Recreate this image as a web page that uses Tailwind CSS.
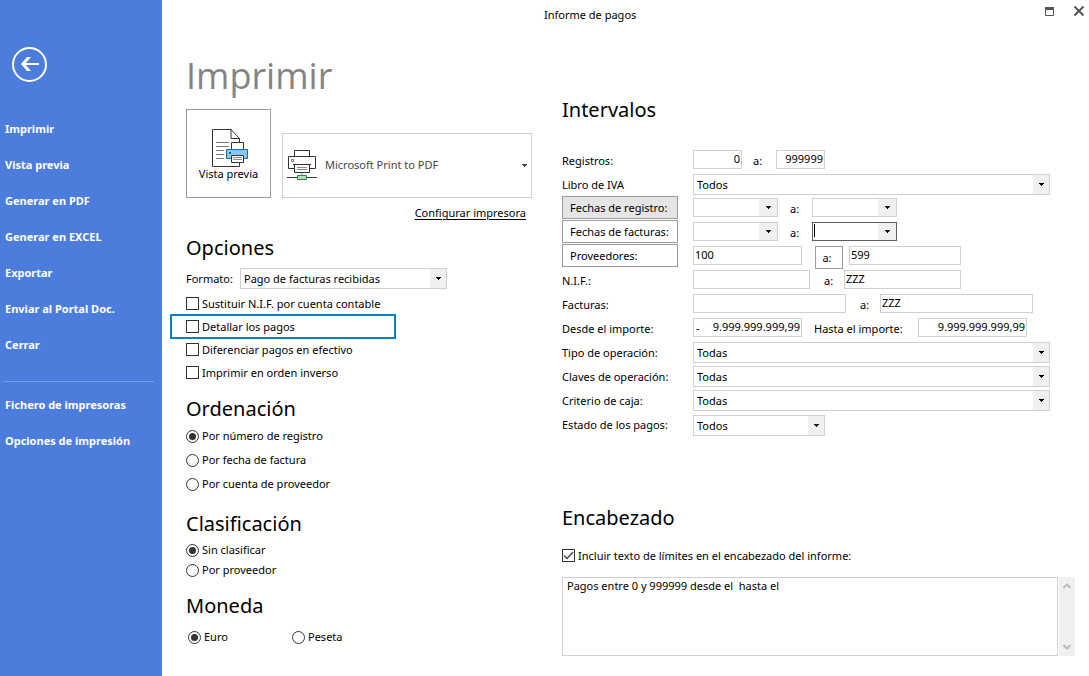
<!DOCTYPE html>
<html lang="es">
<head>
<meta charset="utf-8">
<title>Informe de pagos</title>
<script src="https://cdn.jsdelivr.net/npm/@tailwindcss/browser@4"></script>
</head>
<body class="bg-white text-black text-[11px] leading-4 font-['Noto_Sans','Open_Sans',sans-serif]">
<svg class="hidden"><symbol id="arrow" viewBox="0 0 5 3"><path d="M0 0h5v1H4v1H3v1H2V2H1V1H0z" fill="currentColor"/></symbol></svg>
<div class="flex min-h-screen">
  <nav class="w-[162px] shrink-0 bg-[#4c7ddd] text-white font-bold pt-[46px]">
    <button aria-label="Volver" class="block ml-[11px] mb-[29px]">
      <svg class="block" width="36" height="36" viewBox="0 0 36 36" fill="none" stroke="#fff" stroke-width="2"><circle cx="18.5" cy="18.5" r="16.5"/><path d="M11 18h17" stroke-width="2"/><path d="M10 18l6-7h4l-6 7 6 7h-4z" fill="#fff" stroke="none"/></svg>
    </button>
    <ul class="pl-[5px]">
      <li class="h-9 flex items-center"><a href="#">Imprimir</a></li>
      <li class="h-9 flex items-center"><a href="#">Vista previa</a></li>
      <li class="h-9 flex items-center"><a href="#">Generar en PDF</a></li>
      <li class="h-9 flex items-center"><a href="#">Generar en EXCEL</a></li>
      <li class="h-9 flex items-center"><a href="#">Exportar</a></li>
      <li class="h-9 flex items-center"><a href="#">Enviar al Portal Doc.</a></li>
      <li class="h-9 flex items-center"><a href="#">Cerrar</a></li>
    </ul>
    <hr class="ml-1 mr-2 mt-[18px] mb-[5px] border-[#7b9fe6]">
    <ul class="pl-[5px]">
      <li class="h-9 flex items-center"><a href="#">Fichero de impresoras</a></li>
      <li class="h-9 flex items-center"><a href="#">Opciones de impresión</a></li>
    </ul>
  </nav>

  <div class="flex-1 min-w-0">
    <header class="h-8 flex items-start pl-[382px] pr-[5px] pt-[7px]">
      <span class="flex-1">Informe de pagos</span>
      <button aria-label="Maximizar" class="mr-5"><svg class="block" width="9" height="9" fill="none" stroke="#555"><path d="M.5 .5h8v8h-8z"/><path d="M0 1.5h9" stroke-width="3"/></svg></button>
      <button aria-label="Cerrar" class="-mt-px"><svg class="block" width="10" height="10" stroke="#555" stroke-width="2"><path d="M0.500 .5l9 9M9.500 .5l-9 9"/></svg></button>
    </header>

    <main class="flex pl-6 pr-[14px]">
      <section class="w-[376px] shrink-0 pt-5">
        <h1 class="h-12 leading-[48px] text-[36px] text-[#848484] font-['Open_Sans','Noto_Sans',sans-serif]">Imprimir</h1>
        <div class="flex items-end gap-[11px] mt-[9px]">
          <button class="w-[85px] h-[89px] border border-[#9c9c9c] flex flex-col items-center pt-[18px]">
            <svg class="self-start ml-6" width="38" height="40" viewBox="0 0 38 40" fill="none" stroke="#333">
              <path d="M20.500 1.5h-19v37h27V10.500L20 1.5V10.500H28.500" fill="#fff"/>
              <path d="M5 14.500h13M5 18.500h13M5 22.500h8M5 26.500h8M5 30.500h8" stroke="#777"/>
              <path d="M20.500 21.500v-7h12v7" fill="#fff"/>
              <path d="M15.500 21.500h21v9h-21z" fill="#8cc5ef" stroke="#0f6cb6"/>
              <path d="M18 24h2v2h-2z" fill="#0f6cb6" stroke="none"/>
              <path d="M20.500 27.500h12v7h-12z" fill="#fff"/><path d="M22 29.500h9M22 31.500h9" stroke="#888"/>
            </svg>
            <span class="leading-3">Vista previa</span>
          </button>
          <div class="relative w-[250px] h-[65px]">
            <select aria-label="Impresora" class="appearance-none w-full h-full border border-[#d0d0d0] pl-[42px] pb-[2px] text-[#444] bg-white"><option>Microsoft Print to PDF</option></select>
            <svg class="absolute left-[5px] top-[17px] pointer-events-none" width="30" height="30" fill="none" stroke="#333">
              <path d="M7.500 6.500v-6h15v6M7.500 18.500h-6v-12h27v12h-6"/><path d="M4.500 9.500h2v2h-2z" stroke="#777"/>
              <path d="M7.500 14.500h15v8h-15z" fill="#fff"/><path d="M6 14.500h18"/><path d="M10 17.500h10M10 19.500h10M15 23v2" stroke="#888"/>
              <path d="M0 27.500h10M20 27.500h10"/><path d="M10.500 25.500h9v4h-9z" fill="#b5dcb9" stroke="#109447"/>
            </svg>
            <svg class="absolute right-[5px] top-[31px] w-[5px] h-[3px] text-[#444] pointer-events-none"><use href="#arrow"/></svg>
          </div>
        </div>
        <div class="w-[340px] text-right leading-5 mt-[5px]"><a href="#" class="underline underline-offset-2">Configurar impresora</a></div>

        <h2 class="text-[20px] leading-8 mt-[9px]">Opciones</h2>
        <div class="flex items-center mt-1 h-[21px]">
          <label for="formato" class="w-[54px]">Formato:</label>
          <div class="relative w-[207px] h-[21px]">
            <select id="formato" class="appearance-none w-full h-full border border-[#d0d0d0] pl-[3px] bg-white"><option>Pago de facturas recibidas</option></select>
            <span class="absolute right-px top-px bottom-px w-4 bg-[#f0f0f0] flex items-center justify-center pointer-events-none"><svg class="w-[5px] h-[3px]"><use href="#arrow"/></svg></span>
          </div>
        </div>
        <div class="mt-[3px]">
          <label class="flex items-center gap-[3px] h-[23px]"><input type="checkbox" class="appearance-none size-[13px] border border-[#333]">Sustituir N.I.F. por cuenta contable</label>
          <label class="flex items-center gap-[3px] h-[25px] -my-px -ml-4 w-[226px] pl-[14px] border-2 border-[#0a80c6]"><input type="checkbox" class="appearance-none size-[13px] border border-[#333]">Detallar los pagos</label>
          <label class="flex items-center gap-[3px] h-[23px]"><input type="checkbox" class="appearance-none size-[13px] border border-[#333]">Diferenciar pagos en efectivo</label>
          <label class="flex items-center gap-[3px] h-[23px]"><input type="checkbox" class="appearance-none size-[13px] border border-[#333]">Imprimir en orden inverso</label>
        </div>

        <h2 class="text-[20px] leading-8 mt-[9px]">Ordenación</h2>
        <div class="-mt-px">
          <label class="flex items-center gap-[3px] h-6"><input type="radio" name="orden" checked class="appearance-none size-[13px] rounded-full border border-[#333] checked:bg-[#333] bg-clip-content p-[2px]">Por número de registro</label>
          <label class="flex items-center gap-[3px] h-6"><input type="radio" name="orden" class="appearance-none size-[13px] rounded-full border border-[#333] checked:bg-[#333] bg-clip-content p-[2px]">Por fecha de factura</label>
          <label class="flex items-center gap-[3px] h-6"><input type="radio" name="orden" class="appearance-none size-[13px] rounded-full border border-[#333] checked:bg-[#333] bg-clip-content p-[2px]">Por cuenta de proveedor</label>
        </div>

        <h2 class="text-[20px] leading-8 mt-3">Clasificación</h2>
        <label class="flex items-center gap-[3px] h-5"><input type="radio" name="clasif" checked class="appearance-none size-[13px] rounded-full border border-[#333] checked:bg-[#333] bg-clip-content p-[2px]">Sin clasificar</label>
        <label class="flex items-center gap-[3px] h-5"><input type="radio" name="clasif" class="appearance-none size-[13px] rounded-full border border-[#333] checked:bg-[#333] bg-clip-content p-[2px]">Por proveedor</label>

        <h2 class="text-[20px] leading-8 mt-[10px]">Moneda</h2>
        <div class="flex pl-[2px] mt-[5px]">
          <label class="flex items-center gap-[3px] h-5 w-[104px]"><input type="radio" name="moneda" checked class="appearance-none size-[13px] rounded-full border border-[#333] checked:bg-[#333] bg-clip-content p-[2px]">Euro</label>
          <label class="flex items-center gap-[3px] h-5"><input type="radio" name="moneda" class="appearance-none size-[13px] rounded-full border border-[#333] checked:bg-[#333] bg-clip-content p-[2px]">Peseta</label>
        </div>
      </section>

      <section class="flex-1 min-w-0 pt-[62px]">
        <h2 class="text-[20px] leading-8">Intervalos</h2>
        <div class="mt-[22px]">
          <div class="flex h-6 items-start pt-[2px]">
            <label for="reg1" class="w-[131px] leading-[22px]">Registros:</label>
            <input id="reg1" value="0" class="w-[49px] h-[19px] border border-[#d0d0d0] px-px text-right pb-[2px]">
            <label for="reg2" class="w-[34px] pl-[11px] leading-[22px]">a:</label>
            <input id="reg2" value="999999" class="w-[49px] h-[19px] border border-[#d0d0d0] px-px text-right pb-[2px]">
          </div>
          <div class="flex h-6 items-start pt-[2px]">
            <label for="iva" class="w-[131px] leading-[22px]">Libro de IVA</label>
            <div class="relative flex-1 mr-[25px] h-[21px]">
              <select id="iva" class="appearance-none w-full h-full border border-[#d0d0d0] pl-[3px] bg-white"><option>Todos</option></select>
              <span class="absolute right-px top-px bottom-px w-4 bg-[#f0f0f0] flex items-center justify-center pointer-events-none"><svg class="w-[5px] h-[3px]"><use href="#arrow"/></svg></span>
            </div>
          </div>
          <div class="flex h-6 items-start">
            <button class="w-[116px] h-[23px] mr-[15px] border border-[#9c9c9c] bg-[#e5e5e5] text-left pl-[7px]">Fechas de registro:</button>
            <div class="relative w-[85px] h-[19px] mt-[2px]">
              <input aria-label="Fecha de registro inicial" class="w-full h-full border border-[#d0d0d0] px-px">
              <span class="absolute right-px top-px bottom-px w-[18px] bg-[#f0f0f0] flex items-center justify-center pointer-events-none"><svg class="w-[5px] h-[3px]"><use href="#arrow"/></svg></span>
            </div>
            <span class="w-[34px] pl-3 leading-[26px]">a:</span>
            <div class="relative w-[85px] h-[19px] mt-[2px]">
              <input aria-label="Fecha de registro final" class="w-full h-full border border-[#d0d0d0] px-px">
              <span class="absolute right-px top-px bottom-px w-[18px] bg-[#f0f0f0] flex items-center justify-center pointer-events-none"><svg class="w-[5px] h-[3px]"><use href="#arrow"/></svg></span>
            </div>
          </div>
          <div class="flex h-6 items-start">
            <button class="w-[116px] h-[23px] mr-[15px] border border-[#9c9c9c] bg-white text-left pl-[7px]">Fechas de facturas:</button>
            <div class="relative w-[85px] h-[19px] mt-[2px]">
              <input aria-label="Fecha de factura inicial" class="w-full h-full border border-[#d0d0d0] px-px">
              <span class="absolute right-px top-px bottom-px w-[18px] bg-[#f0f0f0] flex items-center justify-center pointer-events-none"><svg class="w-[5px] h-[3px]"><use href="#arrow"/></svg></span>
            </div>
            <span class="w-[34px] pl-3 leading-[26px]">a:</span>
            <div class="relative w-[85px] h-[19px] mt-[2px]">
              <input aria-label="Fecha de factura final" class="w-full h-full border border-[#5f5f5f] px-px">
              <span class="absolute left-[2px] top-[2px] h-[13px] w-px bg-black"></span>
              <span class="absolute right-px top-px bottom-px w-[18px] bg-[#f0f0f0] flex items-center justify-center pointer-events-none"><svg class="w-[5px] h-[3px]"><use href="#arrow"/></svg></span>
            </div>
          </div>
          <div class="flex h-6 items-start">
            <button class="w-[116px] h-[23px] mr-[15px] border border-[#9c9c9c] bg-white text-left pl-[7px]">Proveedores:</button>
            <input aria-label="Proveedor inicial" value="100" class="w-[109px] h-[19px] mt-[2px] border border-[#d0d0d0] px-px pb-[2px]">
            <button class="w-[28px] h-[23px] mt-[2px] ml-[13px] mr-[6px] border border-[#9c9c9c] bg-white pr-1">a:</button>
            <input aria-label="Proveedor final" value="599" class="w-[112px] h-[19px] mt-[2px] border border-[#d0d0d0] px-px pb-[2px]">
          </div>
          <div class="flex h-6 items-start pt-[2px]">
            <label for="nif1" class="w-[131px] leading-[22px]">N.I.F.:</label>
            <input id="nif1" class="w-[117px] h-[19px] border border-[#d0d0d0] px-px">
            <label for="nif2" class="w-[34px] pl-[14px] leading-[22px]">a:</label>
            <input id="nif2" value="ZZZ" class="w-[117px] h-[19px] border border-[#d0d0d0] px-px pb-[2px]">
          </div>
          <div class="flex h-6 items-start pt-[2px]">
            <label for="fac1" class="w-[131px] leading-[22px]">Facturas:</label>
            <input id="fac1" class="w-[153px] h-[19px] border border-[#d0d0d0] px-px">
            <label for="fac2" class="w-[34px] pl-[14px] leading-[22px]">a:</label>
            <input id="fac2" value="ZZZ" class="w-[153px] h-[19px] border border-[#d0d0d0] px-px pb-[2px]">
          </div>
          <div class="flex h-6 items-start pt-[2px]">
            <label for="imp1" class="w-[131px] leading-[22px]">Desde el importe:</label>
            <div class="relative w-[109px] h-[19px]">
              <input id="imp1" value="9.999.999.999,99" class="block w-full h-full border border-[#d0d0d0] px-px pb-[2px] text-right">
              <span class="absolute left-[3px] top-[2px] leading-[15px]">-</span>
            </div>
            <label for="imp2" class="w-[116px] pl-3 leading-[22px]">Hasta el importe:</label>
            <input id="imp2" value="9.999.999.999,99" class="w-[109px] h-[19px] border border-[#d0d0d0] px-px pb-[2px] text-right">
          </div>
          <div class="flex h-6 items-start pt-[2px]">
            <label for="tipo" class="w-[131px] leading-[22px]">Tipo de operación:</label>
            <div class="relative flex-1 mr-[25px] h-[21px]">
              <select id="tipo" class="appearance-none w-full h-full border border-[#d0d0d0] pl-[3px] bg-white"><option>Todas</option></select>
              <span class="absolute right-px top-px bottom-px w-4 bg-[#f0f0f0] flex items-center justify-center pointer-events-none"><svg class="w-[5px] h-[3px]"><use href="#arrow"/></svg></span>
            </div>
          </div>
          <div class="flex h-6 items-start pt-[2px]">
            <label for="claves" class="w-[131px] leading-[22px]">Claves de operación:</label>
            <div class="relative flex-1 mr-[25px] h-[21px]">
              <select id="claves" class="appearance-none w-full h-full border border-[#d0d0d0] pl-[3px] bg-white"><option>Todas</option></select>
              <span class="absolute right-px top-px bottom-px w-4 bg-[#f0f0f0] flex items-center justify-center pointer-events-none"><svg class="w-[5px] h-[3px]"><use href="#arrow"/></svg></span>
            </div>
          </div>
          <div class="flex h-6 items-start pt-[2px]">
            <label for="caja" class="w-[131px] leading-[22px]">Criterio de caja:</label>
            <div class="relative flex-1 mr-[25px] h-[21px]">
              <select id="caja" class="appearance-none w-full h-full border border-[#d0d0d0] pl-[3px] bg-white"><option>Todas</option></select>
              <span class="absolute right-px top-px bottom-px w-4 bg-[#f0f0f0] flex items-center justify-center pointer-events-none"><svg class="w-[5px] h-[3px]"><use href="#arrow"/></svg></span>
            </div>
          </div>
          <div class="flex h-6 items-start pt-[3px]">
            <label for="estado" class="w-[131px] leading-5">Estado de los pagos:</label>
            <div class="relative w-[132px] h-[21px]">
              <select id="estado" class="appearance-none w-full h-full border border-[#d0d0d0] pl-[3px] bg-white"><option>Todos</option></select>
              <span class="absolute right-px top-px bottom-px w-4 bg-[#f0f0f0] flex items-center justify-center pointer-events-none"><svg class="w-[5px] h-[3px]"><use href="#arrow"/></svg></span>
            </div>
          </div>
        </div>

        <h2 class="text-[20px] leading-8 mt-[66px]">Encabezado</h2>
        <label class="flex items-center gap-[3px] h-[19px] mt-3">
          <span class="relative size-[13px]"><input type="checkbox" checked class="block appearance-none size-[13px] border border-[#333]"><svg class="absolute inset-0 pointer-events-none" width="13" height="13" fill="none" stroke="#444" stroke-width="1.4"><path d="M2 6.500l3 3L11 3"/></svg></span>
          Incluir texto de límites en el encabezado del informe:
        </label>
        <div class="flex mt-3 gap-px">
          <textarea aria-label="Encabezado del informe" class="block flex-1 h-[79px] resize-none border border-[#d0d0d0] px-1 py-0 leading-4 overflow-hidden">Pagos entre 0 y 999999 desde el  hasta el</textarea>
          <div class="w-4 bg-[#f0f0f0] flex flex-col items-center justify-between py-[6px]">
            <svg width="8" height="6" fill="none" stroke="#bbb" stroke-width="2"><path d="M.5 5L4 1.500 7.500 5"/></svg>
            <svg width="8" height="6" fill="none" stroke="#bbb" stroke-width="2"><path d="M.5 1L4 4.500 7.500 1"/></svg>
          </div>
        </div>
      </section>
    </main>
  </div>
</div>
</body>
</html>
